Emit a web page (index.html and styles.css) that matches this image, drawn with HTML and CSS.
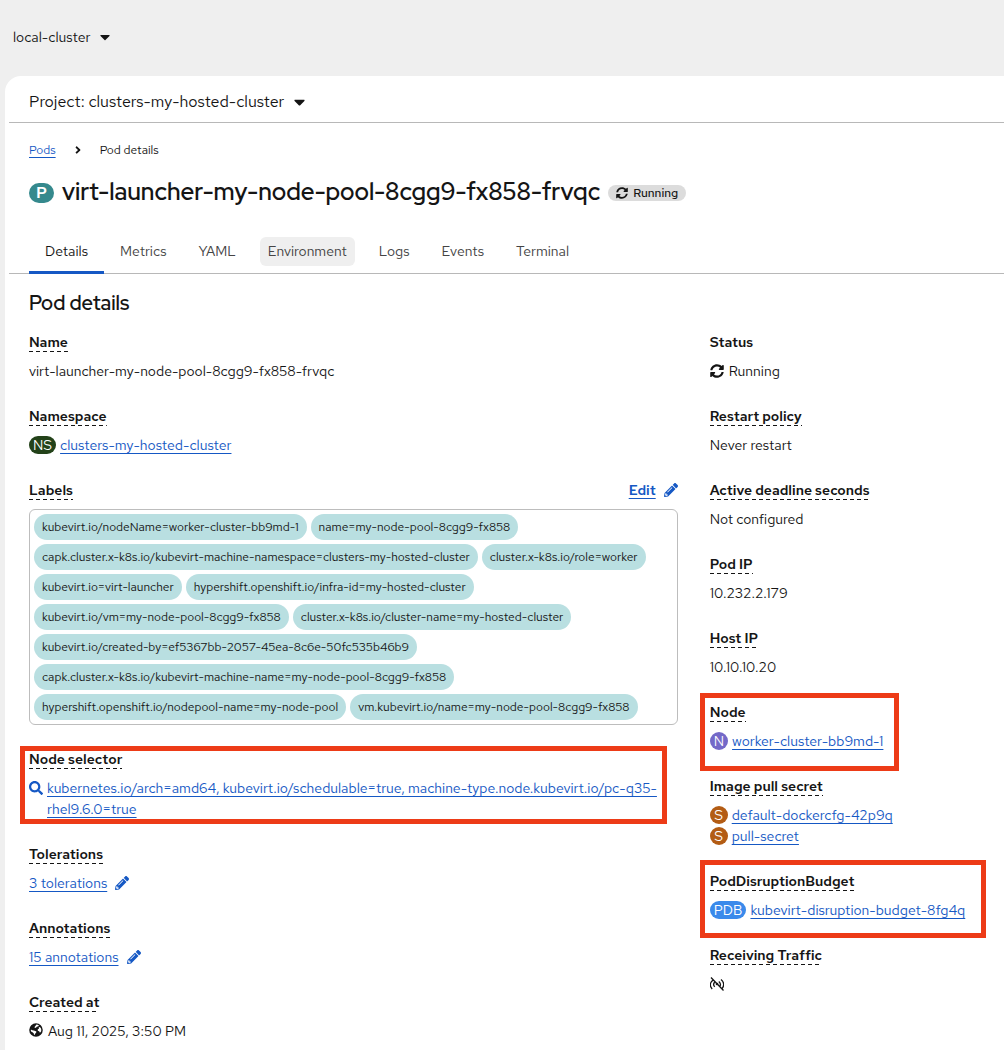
FILE: index.html
```
<!DOCTYPE html>
<html lang="en">
<head>
<meta charset="utf-8">
<meta name="viewport" content="width=device-width, initial-scale=1">
<title>virt-launcher-my-node-pool-8cgg9-fx858-frvqc</title>
<link rel="stylesheet" href="styles.css">
</head>
<body>
<svg class="sprite" aria-hidden="true">
  <symbol id="caret" viewBox="0 0 320 512"><path d="M31.3 192h257.3c17.8 0 26.7 21.500 14.100 34.100L174.100 354.800c-7.800 7.800-20.500 7.800-28.300 0L17.200 226.100C4.600 213.500 13.500 192 31.300 192z"/></symbol>
  <symbol id="angle" viewBox="0 0 256 512"><path d="M224.300 273l-136 136c-9.400 9.400-24.600 9.400-33.900 0l-22.600-22.600c-9.400-9.400-9.400-24.600 0-33.900l96.400-96.400-96.400-96.400c-9.400-9.400-9.400-24.600 0-33.900L54.300 103c9.400-9.400 24.600-9.400 33.900 0l136 136c9.500 9.400 9.500 24.600.1 34z"/></symbol>
  <symbol id="sync" viewBox="0 0 512 512"><path d="M370.720 133.280C339.458 104.008 298.888 87.962 255.848 88c-77.458.068-144.328 53.178-162.791 126.850-1.344 5.363-6.122 9.150-11.651 9.150H24.103c-7.498 0-13.194-6.807-11.807-14.176C33.933 94.924 134.813 8 256 8c66.448 0 126.791 26.136 171.315 68.685L463.030 40.970C478.149 25.851 504 36.559 504 57.941V192c0 13.255-10.745 24-24 24H345.941c-21.382 0-32.090-25.851-16.971-40.971l41.750-41.749zM32 296h134.059c21.382 0 32.090 25.851 16.971 40.971l-41.750 41.750c31.262 29.273 71.835 45.319 114.876 45.280 77.418-.070 144.315-53.144 162.787-126.849 1.344-5.363 6.122-9.150 11.651-9.150h57.304c7.498 0 13.194 6.807 11.807 14.176C478.067 417.076 377.187 504 256 504c-66.448 0-126.791-26.136-171.315-68.685L48.970 471.030C33.851 486.149 8 475.441 8 454.059V320c0-13.255 10.745-24 24-24z"/></symbol>
  <symbol id="pencil" viewBox="0 0 512 512"><path d="M497.900 142.100l-46.100 46.100c-4.700 4.700-12.300 4.700-17 0l-111-111c-4.700-4.700-4.700-12.300 0-17l46.100-46.100c18.700-18.700 49.100-18.700 67.900 0l60.100 60.100c18.800 18.700 18.800 49.100 0 67.900zM284.200 99.800L21.600 362.400.400 483.900c-2.900 16.400 11.400 30.600 27.800 27.800l121.500-21.300 262.600-262.600c4.700-4.700 4.700-12.300 0-17l-111-111c-4.800-4.700-12.400-4.700-17.100 0zM124.100 339.900c-5.500-5.500-5.500-14.300 0-19.800l154-154c5.500-5.500 14.300-5.500 19.800 0s5.500 14.300 0 19.800l-154 154c-5.500 5.500-14.300 5.500-19.800 0zM88 424h48v36.300l-64.500 11.300-31.100-31.100L51.700 376H88v48z"/></symbol>
  <symbol id="search" viewBox="0 0 512 512"><path d="M505 442.700L405.300 343c-4.500-4.500-10.600-7-17-7H372c27.600-35.300 44-79.700 44-128C416 93.100 322.900 0 208 0S0 93.100 0 208s93.100 208 208 208c48.300 0 92.700-16.400 128-44v16.300c0 6.400 2.500 12.500 7 17l99.700 99.700c9.400 9.400 24.600 9.400 33.900 0l28.300-28.300c9.400-9.400 9.400-24.600.1-34zM208 336c-70.700 0-128-57.200-128-128 0-70.700 57.200-128 128-128 70.700 0 128 57.200 128 128 0 70.700-57.200 128-128 128z"/></symbol>
  <symbol id="globe" viewBox="0 0 496 512"><path fill-rule="evenodd" d="M248 8a248 248 0 1 0 0 496a248 248 0 0 0 0-496zM264 52L310 64L356 90L336 118L276 134L256 166L214 186L196 176L206 130L232 100ZM62 236L110 262L170 276L222 290L262 312L256 350L222 384L200 436L172 424L164 374L120 340L78 320L58 280ZM376 142L416 176L438 220L440 290L418 334L384 346L364 306L326 290L306 254L322 220L360 206L344 176Z"/></symbol>
  <symbol id="no-signal" viewBox="0 0 14 14"><path d="M1 0.500L13.500 13.500M3 3C-0.500 6-0.300 9.500 2.200 12M4.600 5.200C3.200 6.800 3.500 8.500 4.800 9.700M11 2.500C14.300 5 14.300 9 12.200 11.200M8.800 4.500C10.500 6 10.800 7.700 10 9.100" fill="none" stroke="currentColor" stroke-width="1.300"/><circle cx="7" cy="7" r="1.300"/></symbol>
</svg>

<header class="masthead">
  <button class="toggle" type="button">local-cluster <svg class="caret"><use href="#caret"/></svg></button>
</header>

<main class="page">
  <div class="project-bar">
    <button class="toggle toggle-lg" type="button">Project: clusters-my-hosted-cluster <svg class="caret caret-lg"><use href="#caret"/></svg></button>
  </div>

  <nav class="breadcrumb" aria-label="Breadcrumb">
    <a class="link" href="#pods">Pods</a>
    <svg class="angle"><use href="#angle"/></svg>
    <span>Pod details</span>
  </nav>

  <div class="title-row">
    <span class="badge badge-lg badge-pod">P</span>
    <h1 class="title">virt-launcher-my-node-pool-8cgg9-fx858-frvqc</h1>
    <span class="status-pill"><svg class="icon-sm"><use href="#sync"/></svg>Running</span>
  </div>

  <nav class="tabs" aria-label="Pod sections">
    <a class="tab tab-current" href="#details" aria-current="page"><span>Details</span></a>
    <a class="tab" href="#metrics"><span>Metrics</span></a>
    <a class="tab" href="#yaml"><span>YAML</span></a>
    <a class="tab tab-hover" href="#environment"><span>Environment</span></a>
    <a class="tab" href="#logs"><span>Logs</span></a>
    <a class="tab" href="#events"><span>Events</span></a>
    <a class="tab" href="#terminal"><span>Terminal</span></a>
  </nav>

  <section class="details">
    <h2 class="heading">Pod details</h2>
    <div class="columns">
      <dl class="list">
        <div class="group">
          <dt><span class="term">Name</span></dt>
          <dd>virt-launcher-my-node-pool-8cgg9-fx858-frvqc</dd>
        </div>
        <div class="group">
          <dt><span class="term">Namespace</span></dt>
          <dd class="resource"><span class="badge badge-ns">NS</span><a class="link" href="#ns">clusters-my-hosted-cluster</a></dd>
        </div>
        <div class="group">
          <dt class="term-row"><span class="term">Labels</span><button class="edit" type="button"><span class="link">Edit</span><svg class="icon"><use href="#pencil"/></svg></button></dt>
          <dd class="labels">
            <a class="chip" href="#l1">kubevirt.io/nodeName=worker-cluster-bb9md-1</a>
            <a class="chip" href="#l2">name=my-node-pool-8cgg9-fx858</a>
            <a class="chip" href="#l3">capk.cluster.x-k8s.io/kubevirt-machine-namespace=clusters-my-hosted-cluster</a>
            <a class="chip" href="#l4">cluster.x-k8s.io/role=worker</a>
            <a class="chip" href="#l5">kubevirt.io=virt-launcher</a>
            <a class="chip" href="#l6">hypershift.openshift.io/infra-id=my-hosted-cluster</a>
            <a class="chip" href="#l7">kubevirt.io/vm=my-node-pool-8cgg9-fx858</a>
            <a class="chip" href="#l8">cluster.x-k8s.io/cluster-name=my-hosted-cluster</a>
            <a class="chip" href="#l9">kubevirt.io/created-by=ef5367bb-2057-45ea-8c6e-50fc535b46b9</a>
            <a class="chip" href="#l10">capk.cluster.x-k8s.io/kubevirt-machine-name=my-node-pool-8cgg9-fx858</a>
            <a class="chip" href="#l11">hypershift.openshift.io/nodepool-name=my-node-pool</a>
            <a class="chip" href="#l12">vm.kubevirt.io/name=my-node-pool-8cgg9-fx858</a>
          </dd>
        </div>
        <div class="group marked marked-selector">
          <dt><span class="term">Node selector</span></dt>
          <dd class="selector"><svg class="icon"><use href="#search"/></svg><span><a class="link" href="#selector">kubernetes.io/arch=amd64, kubevirt.io/schedulable=true, machine-type.node.kubevirt.io/pc-q35-<wbr>rhel9.6.0=true</a></span></dd>
        </div>
        <div class="group">
          <dt><span class="term">Tolerations</span></dt>
          <dd><button class="edit" type="button"><span class="link">3 tolerations</span><svg class="icon"><use href="#pencil"/></svg></button></dd>
        </div>
        <div class="group">
          <dt><span class="term">Annotations</span></dt>
          <dd><button class="edit" type="button"><span class="link">15 annotations</span><svg class="icon"><use href="#pencil"/></svg></button></dd>
        </div>
        <div class="group">
          <dt><span class="term">Created at</span></dt>
          <dd class="resource timestamp"><svg class="icon"><use href="#globe"/></svg><time datetime="2025-08-11T15:50">Aug 11, 2025, 3:50 PM</time></dd>
        </div>
      </dl>

      <dl class="list">
        <div class="group">
          <dt>Status</dt>
          <dd class="resource"><svg class="icon"><use href="#sync"/></svg>Running</dd>
        </div>
        <div class="group">
          <dt><span class="term">Restart policy</span></dt>
          <dd>Never restart</dd>
        </div>
        <div class="group">
          <dt><span class="term">Active deadline seconds</span></dt>
          <dd>Not configured</dd>
        </div>
        <div class="group">
          <dt><span class="term">Pod IP</span></dt>
          <dd>10.232.2.179</dd>
        </div>
        <div class="group">
          <dt><span class="term">Host IP</span></dt>
          <dd>10.10.10.20</dd>
        </div>
        <div class="group marked marked-node">
          <dt><span class="term">Node</span></dt>
          <dd class="resource"><span class="badge badge-node">N</span><a class="link" href="#node">worker-cluster-bb9md-1</a></dd>
        </div>
        <div class="group">
          <dt><span class="term">Image pull secret</span></dt>
          <dd class="resource"><span class="badge badge-secret">S</span><a class="link" href="#s1">default-dockercfg-42p9q</a></dd>
          <dd class="resource"><span class="badge badge-secret">S</span><a class="link" href="#s2">pull-secret</a></dd>
        </div>
        <div class="group marked marked-budget">
          <dt><span class="term">PodDisruptionBudget</span></dt>
          <dd class="resource"><span class="badge badge-pdb">PDB</span><a class="link" href="#pdb">kubevirt-disruption-budget-8fg4q</a></dd>
        </div>
        <div class="group">
          <dt><span class="term">Receiving Traffic</span></dt>
          <dd class="resource"><svg class="icon" role="img" aria-label="Not receiving traffic"><use href="#no-signal"/></svg></dd>
        </div>
      </dl>
    </div>
  </section>
</main>
</body>
</html>
```

FILE: styles.css
```
* { box-sizing: border-box; }

body {
  margin: 0;
  background: #efefef;
  color: #151515;
  font: 14px/21px "Red Hat Text", Inter, "Noto Sans", sans-serif;
}

h1, h2, dl, dd { margin: 0; }
button { padding: 0; border: 0; background: none; color: inherit; font: inherit; cursor: pointer; }
svg { flex: none; fill: currentColor; }
.sprite { position: absolute; width: 0; height: 0; }

.icon { width: 14px; height: 14px; }
.icon-sm { width: 12px; height: 12px; }
.caret { width: 10px; height: 16px; }
.caret-lg { width: 11px; height: 18px; }
.angle { width: 6px; height: 12px; }

.link {
  color: #1558c4;
  text-decoration: underline;
  text-decoration-thickness: 1px;
  text-underline-offset: 3px;
}

.masthead { display: flex; align-items: center; height: 76px; padding: 0 13px 2px; }
.toggle { display: flex; align-items: center; gap: 10px; }
.toggle-lg { font-size: 16px; line-height: 24px; }

.page {
  min-height: calc(100vh - 76px);
  margin-left: 5px;
  padding: 0 0 8px 4px;
  border-top-left-radius: 16px;
  background: #fff;
  overflow: hidden;
}

.project-bar {
  display: flex;
  align-items: center;
  height: 47px;
  padding: 6px 20px 0;
  border-bottom: 1px solid #b8b8b8;
}

.breadcrumb {
  display: flex;
  align-items: center;
  gap: 19px;
  padding: 18px 20px 0;
  font-size: 12px;
  line-height: 18px;
}

.title-row { display: flex; align-items: center; gap: 8px; padding: 16px 20px 0; }
.title {
  padding-bottom: 2px;
  font-family: "Red Hat Display", "Red Hat Text", Inter, sans-serif;
  font-size: 24px;
  font-weight: 600;
  line-height: 34px;
  white-space: nowrap;
}

.status-pill {
  display: flex;
  align-items: center;
  gap: 5px;
  padding: 0 8px;
  border-radius: 8px;
  background: #dcdcdc;
  font-size: 12px;
  font-weight: 500;
  line-height: 16px;
}

.badge {
  padding: 0 4px;
  min-width: 18px;
  border-radius: 9px;
  color: #fff;
  font-size: 14px;
  line-height: 18px;
  text-align: center;
}
.badge-lg { min-width: 25px; border-radius: 10px; font-size: 16px; font-weight: 600; line-height: 20px; }
.badge-pod { background: #35898d; }
.badge-ns { background: #234219; }
.badge-node { background: #7469c8; }
.badge-secret { background: #b35c14; }
.badge-pdb { background: #3a8aeb; }

.tabs { display: flex; padding: 18px 20px 0; border-bottom: 1px solid #b8b8b8; }
.tab {
  margin-bottom: -1px;
  padding: 8px 8px 5px;
  border-bottom: 3px solid transparent;
  color: #444;
  text-decoration: none;
}
.tab span { display: block; padding: 4px 8px; border-radius: 6px; }
.tab-current { border-color: #1558c4; color: #151515; }
.tab-hover span { background: #efefef; }

.details { padding: 16px 24px 0 20px; }
.heading {
  font-family: "Red Hat Display", "Red Hat Text", Inter, sans-serif;
  font-size: 20px;
  font-weight: 600;
  line-height: 26px;
}
.columns {
  display: grid;
  grid-template-columns: minmax(0, 12fr) minmax(0, 5fr);
  gap: 32px;
  padding-top: 16px;
}

.list { display: flex; flex-direction: column; gap: 24px; }
dt { margin-bottom: 8px; font-weight: 600; }
.term {
  display: inline-block;
  height: 20px;
  background: repeating-linear-gradient(90deg, #151515 0 4px, transparent 4px 7px) bottom / 100% 1px no-repeat;
}
.term-row, .resource, .edit { display: flex; align-items: center; }
.term-row { justify-content: space-between; align-items: flex-start; height: 21px; }
.resource { gap: 4px; min-height: 21px; white-space: nowrap; }
.resource .badge { margin-bottom: 1px; }
.resource .icon { margin: 0 1px 1px 0; }
.timestamp .icon { margin-bottom: 4px; }
.edit { gap: 8px; color: #1558c4; }
.edit .icon { margin-bottom: 1px; }

.labels {
  display: flex;
  flex-wrap: wrap;
  gap: 4px;
  padding: 4px;
  border: 1px solid #bdbdbd;
  border-radius: 6px;
}
.chip {
  padding: 0 8px;
  border-radius: 13px;
  background: #b9dfe1;
  color: #151515;
  font-size: 12px;
  line-height: 26px;
  text-decoration: none;
  white-space: nowrap;
}

.selector { display: flex; gap: 4px; }
.selector .icon { margin-top: 3px; color: #1558c4; }

/* Callout frames drawn over the highlighted groups */
.marked { position: relative; }
.marked::after { content: ""; position: absolute; border: 5px solid #ed3b17; pointer-events: none; }
.marked-selector::after { inset: -3px 11px -4px -9px; }
.marked-node::after { inset: -9px 81px -19px -10px; }
.marked-budget::after { inset: -11px -6px -17px -10px; }
```
